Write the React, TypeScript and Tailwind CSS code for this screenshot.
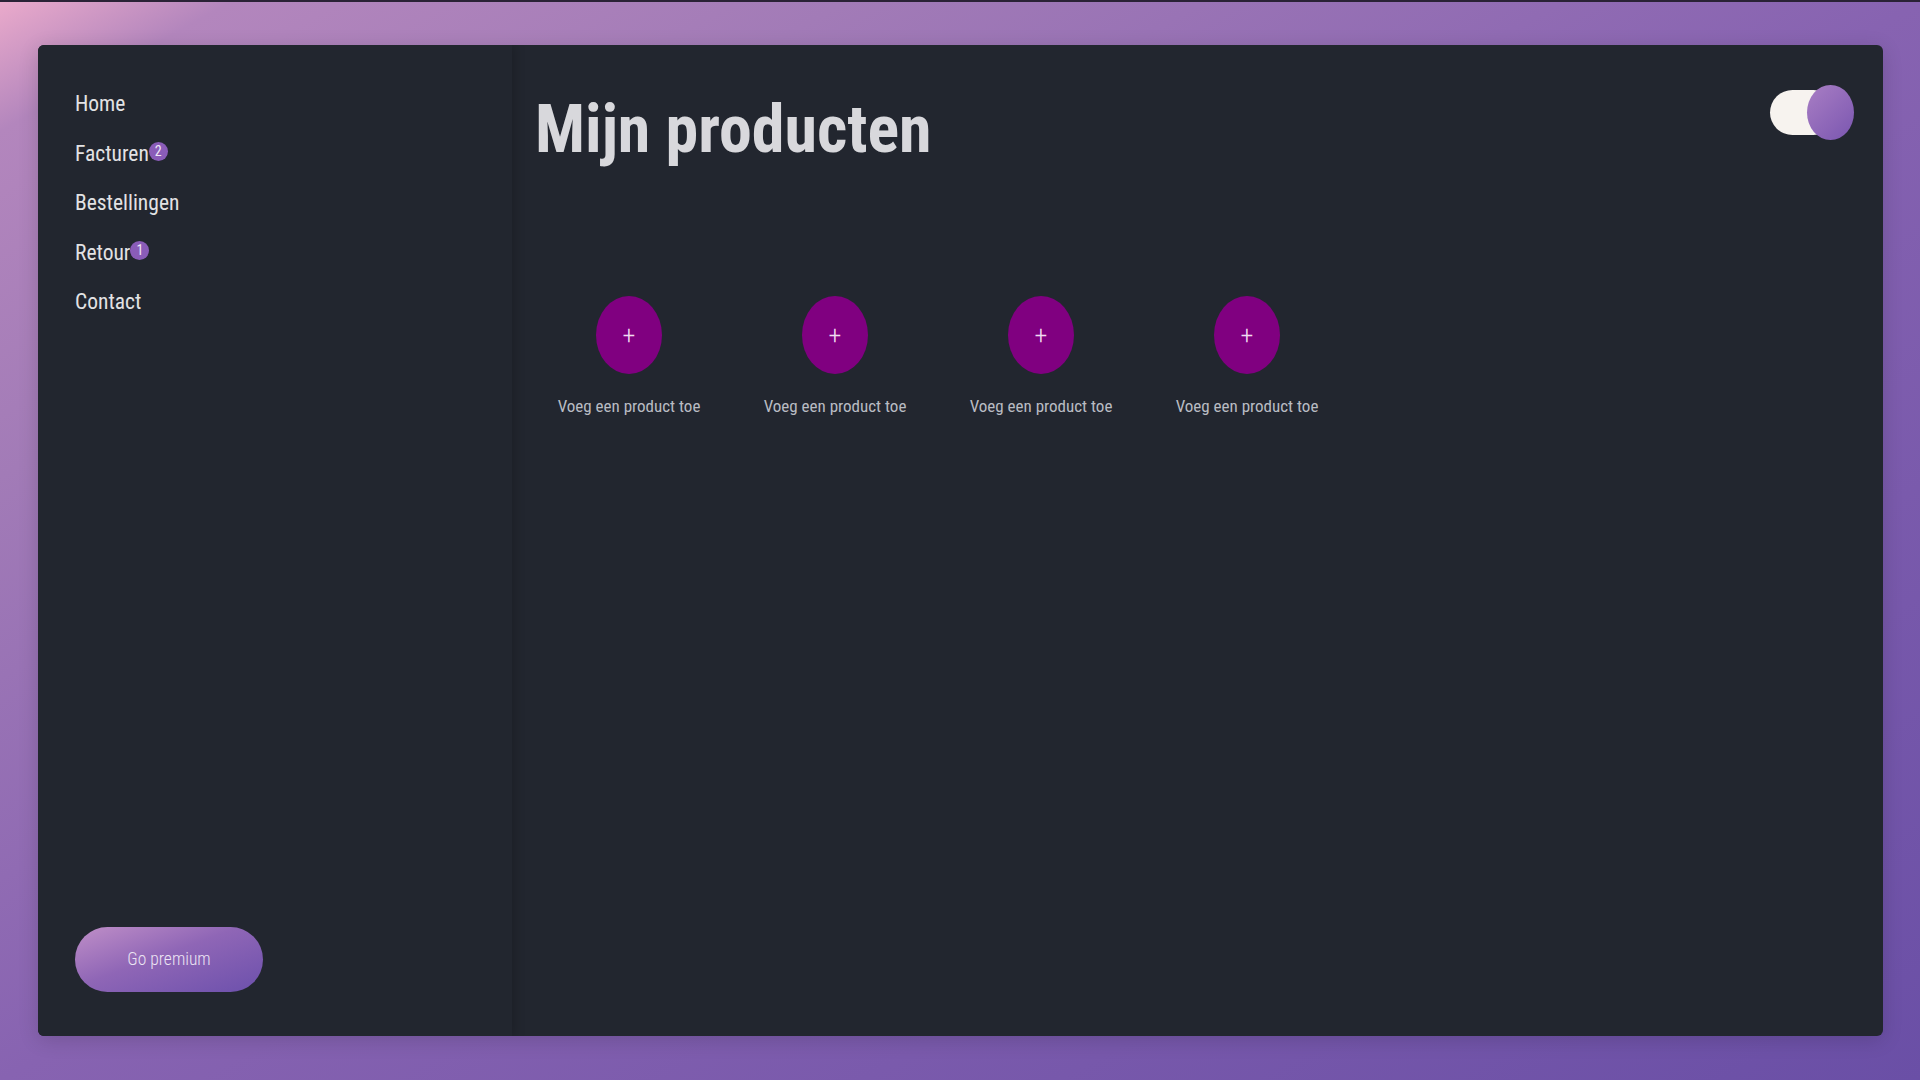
import React, { useState } from "react";

const navItems = [
  { label: "Home", badge: 0 },
  { label: "Facturen", badge: 2 },
  { label: "Bestellingen", badge: 0 },
  { label: "Retour", badge: 1 },
  { label: "Contact", badge: 0 },
];

const slots = [1, 2, 3, 4];

export default function App() {
  const [dark, setDark] = useState(true);

  return (
    <div className="h-screen w-full border-t-2 border-[#2a2236] bg-[linear-gradient(to_bottom_right,#eaaacb_0%,#b386bd_6%,#a27bb7_22%,#8763b1_50%,#6a4fa6_100%)] pt-[43px] pr-[37px] pb-[44px] pl-[38px] font-['Roboto_Condensed','Liberation_Sans_Narrow',Roboto,sans-serif]">
      <div className="flex h-full overflow-hidden rounded-md bg-[#22262f] shadow-[0_4px_20px_rgba(0,0,0,0.15)]">
        {/* Sidebar */}
        <aside className="relative z-10 flex w-[474px] shrink-0 flex-col justify-between bg-[#22262f] pt-[44px] pb-[44px] pl-[37px] shadow-[3px_0_10px_rgba(0,0,0,0.18)]">
          <nav className="flex flex-col gap-[19.5px]">
            {navItems.map((item) => (
              <a key={item.label} href="#" className="flex h-[30px] items-center text-[21.5px] leading-[30px] text-[#e2e2e4]">
                <span>{item.label}</span>
                {item.badge > 0 && (
                  <span className="-mt-[5px] flex h-[19px] w-[19px] items-center justify-center rounded-full bg-[#8a5cb8] text-[14px] leading-none text-[#efe6f5]">
                    {item.badge}
                  </span>
                )}
              </a>
            ))}
          </nav>
          <button className="flex h-[65px] w-[188px] items-center justify-center rounded-full bg-[linear-gradient(160deg,#c08fc8_0%,#8f66b6_45%,#6c50ac_100%)] text-[17.5px] font-light text-[#ece4f3]">
            Go premium
          </button>
        </aside>

        {/* Main */}
        <main className="flex-1 pt-[36px] pr-[29px] pl-[10px]">
          <div className="flex items-start justify-between">
            <h1 className="pt-[16px] pl-[13px] text-[66px] leading-none font-bold text-[#d8d8dc]">Mijn producten</h1>
            <button onClick={() => setDark(!dark)} className="relative mt-[4px] h-[55px] w-[84px]">
              <span className="absolute top-[5px] left-0 h-[45px] w-[66px] rounded-full bg-[#f7f3ef]" />
              <span className="absolute top-0 right-0 h-[55px] w-[47px] rounded-[50%] bg-[linear-gradient(135deg,#a97ec4_0%,#7a56b0_100%)]" />
            </button>
          </div>

          <div className="mt-[133px] flex pl-[4px]">
            {slots.map((s) => (
              <div key={s} className="flex w-[206px] flex-col items-center">
                <button className="flex h-[78px] w-[66px] items-center justify-center rounded-[50%] bg-[#800080] text-[26px] leading-none font-light text-[#f0dcf0]">
                  +
                </button>
                <span className="mt-[22px] text-[17px] leading-[20px] text-[#b9bcc3]">Voeg een product toe</span>
              </div>
            ))}
          </div>
        </main>
      </div>
    </div>
  );
}
